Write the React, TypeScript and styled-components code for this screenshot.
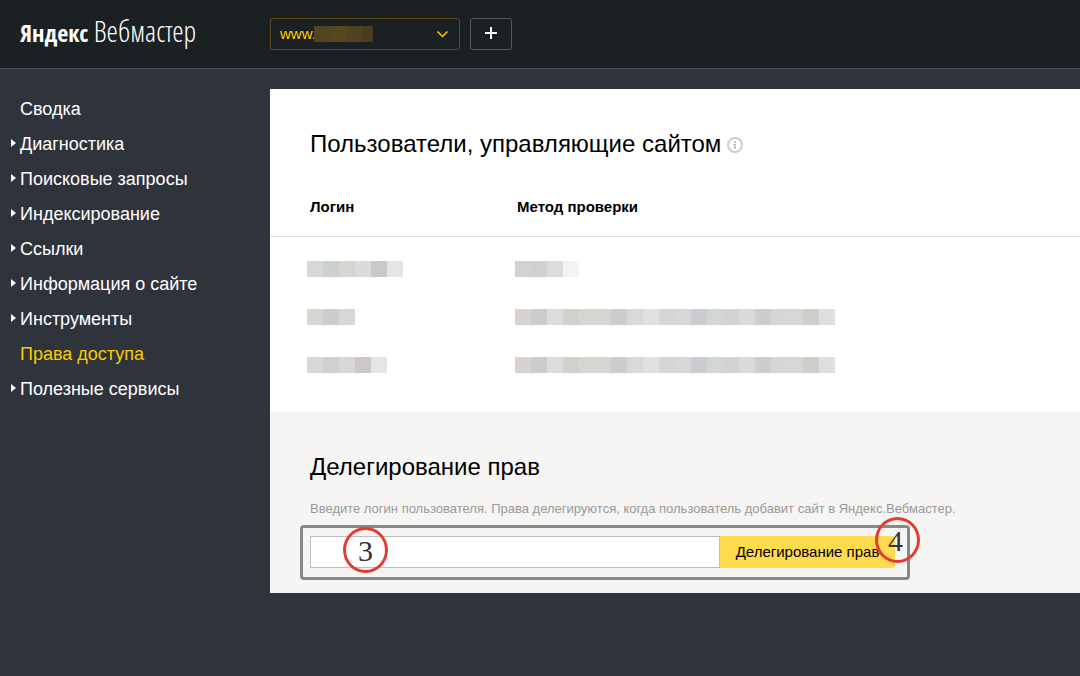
import React from 'react';
import styled, { createGlobalStyle } from 'styled-components';

const GlobalStyle = createGlobalStyle`
  *, *::before, *::after { box-sizing: border-box; }
  body {
    margin: 0;
    background: #2f333b;
    color: #000;
    font-family: 'Liberation Sans', Arial, sans-serif;
  }
`;

const Page = styled.div`
  min-height: 100vh;
  display: flex;
  flex-direction: column;
`;

const Header = styled.header`
  display: flex;
  align-items: center;
  height: 69px;
  border-bottom: 1px solid #484b4e;
  background: #1b2023;
`;

const Logo = styled.a`
  flex: 0 0 270px;
  padding: 0 0 4px 20px;
  color: #fff;
  font-family: 'Open Sans Condensed Light', 'Roboto Condensed Light', 'Roboto Condensed', 'Open Sans Condensed', sans-serif;
  font-size: 29px;
  line-height: 32px;
  font-weight: 300;
  white-space: nowrap;
  text-decoration: none;
`;

const LogoBrand = styled.strong`
  font-family: 'Open Sans Condensed', 'Roboto Condensed', sans-serif;
  font-size: 24px;
  font-weight: 700;
`;

const SitePicker = styled.div`
  position: relative;
  width: 190px;
  margin-right: 10px;
`;

const SiteSelect = styled.select`
  display: block;
  width: 100%;
  height: 32px;
  padding: 0 32px 2px 9px;
  border: 1px solid #5c4c18;
  border-radius: 3px;
  background: transparent;
  color: #fc0;
  font-family: inherit;
  font-size: 15px;
  appearance: none;
`;

const Chevron = styled.svg`
  position: absolute;
  right: 11px;
  top: 11px;
  pointer-events: none;
`;

const SiteMask = styled.div`
  position: absolute;
  left: 44px;
  top: 8px;
  pointer-events: none;
`;

const AddButton = styled.button`
  display: flex;
  align-items: center;
  justify-content: center;
  width: 42px;
  height: 32px;
  padding: 0 0 2px;
  border: 1px solid #54585b;
  border-radius: 3px;
  background: transparent;
`;

const Main = styled.div`
  display: flex;
  flex: 1;
  align-items: flex-start;
`;

const Sidebar = styled.nav`
  flex: 0 0 270px;
  padding-top: 22px;
`;

const Menu = styled.ul`
  margin: 0;
  padding: 0;
  list-style: none;
`;

const MenuItem = styled.li`
  display: flex;
  align-items: center;
  height: 35px;
  padding-left: 11px;
`;

const Arrow = styled.span<{ $visible: boolean }>`
  width: 9px;
  height: 10px;
  &::before {
    content: '';
    display: ${(p) => (p.$visible ? 'block' : 'none')};
    width: 0;
    border: 4px solid transparent;
    border-left: 5px solid #fff;
    border-right: 0;
  }
`;

const MenuLink = styled.a<{ $active: boolean }>`
  padding-top: 2px;
  color: ${(p) => (p.$active ? '#f8cc00' : '#fff')};
  font-size: 18px;
  line-height: 33px;
  text-decoration: none;
`;

const Content = styled.main`
  flex: 1;
  min-width: 0;
  margin-top: 20px;
  background: #fff;
`;

const Users = styled.section`
  padding: 40px 0 23px;
`;

const Delegation = styled.section`
  padding: 40px 40px 25px;
  background: #f6f5f3;
`;

const TitleRow = styled.div`
  display: flex;
  align-items: center;
  gap: 6px;
  padding-left: 40px;
`;

const Title = styled.h2`
  margin: 0;
  font-size: 24px;
  line-height: 30px;
  font-weight: 400;
`;

const InfoButton = styled.button`
  display: flex;
  margin: 2px 0 0;
  padding: 0;
  border: 0;
  background: none;
`;

const UsersTable = styled.table`
  width: 100%;
  margin-top: 18px;
  border-collapse: separate;
  border-spacing: 0;
  table-layout: fixed;
`;

const HeadCell = styled.th<{ $first?: boolean }>`
  width: ${(p) => (p.$first ? '245px' : 'auto')};
  height: 60px;
  padding: 0 0 0 ${(p) => (p.$first ? '40px' : '2px')};
  border-bottom: 1px solid #ddd;
  font-size: 15px;
  font-weight: 700;
  text-align: left;
`;

const Rows = styled.tbody`
  &::before {
    content: '';
    display: table-row;
    height: 8px;
  }
`;

const Cell = styled.td<{ $first?: boolean }>`
  height: 48px;
  padding: 0 0 0 ${(p) => (p.$first ? '37px' : '0')};
`;

const Mosaic = styled.div`
  display: flex;
`;

const Tile = styled.span<{ $color: string; $narrow?: boolean }>`
  width: ${(p) => (p.$narrow ? 11 : 16)}px;
  height: 16px;
  background: ${(p) => p.$color};
`;

const Hint = styled.p`
  margin: 18px 0;
  color: #999;
  font-size: 13px;
  line-height: 18px;
`;

const LoginForm = styled.form`
  position: relative;
  display: flex;
  max-width: 585px;
  height: 32px;
`;

const LoginInput = styled.input`
  flex: 1;
  min-width: 0;
  padding: 0 10px;
  border: 1px solid #bfbfbf;
  border-radius: 0;
  background: #fff;
  font-family: inherit;
  font-size: 15px;
`;

const SubmitButton = styled.button`
  width: 175px;
  padding: 0 15px 2px;
  border: 0;
  border-radius: 0 3px 3px 0;
  background: #ffdb4d;
  color: #000;
  font-family: inherit;
  font-size: 15px;
  white-space: nowrap;
`;

const Highlight = styled.div`
  position: absolute;
  inset: -11px -15px -12px -10px;
  border: 3px solid #888;
  border-radius: 4px;
  pointer-events: none;
`;

const StepMark = styled.span<{ $side: 'left' | 'right' }>`
  position: absolute;
  top: ${(p) => (p.$side === 'left' ? '-9px' : '-19px')};
  ${(p) => (p.$side === 'left' ? 'left: 33px;' : 'right: -25px; padding-right: 4px;')}
  width: 45px;
  height: 46px;
  border: 3px solid #e63b30;
  border-radius: 50%;
  color: #333;
  font-family: 'Liberation Serif', serif;
  font-size: 30px;
  line-height: 42px;
  text-align: center;
  pointer-events: none;
`;

const menu = [
  { label: 'Сводка', nested: false },
  { label: 'Диагностика', nested: true },
  { label: 'Поисковые запросы', nested: true },
  { label: 'Индексирование', nested: true },
  { label: 'Ссылки', nested: true },
  { label: 'Информация о сайте', nested: true },
  { label: 'Инструменты', nested: true },
  { label: 'Права доступа', nested: false, active: true },
  { label: 'Полезные сервисы', nested: true },
];

const siteTiles = ['#51451f', '#57481c', '#50431f', '#463e20'];

const longMethod = [
  '#d9d3cf', '#cbccce', '#dcdcdc', '#d0d1cb', '#d4d6d2', '#d5d6d1', '#cecbcc',
  '#dbd9d6', '#dfe1df', '#d5d5d8', '#dad8d6', '#cbccd1', '#d1d7d4', '#d1d3d4',
  '#dcdad8', '#cdcdcf', '#d5d7d6', '#d8d6d9', '#cfcfc9', '#e0dee4',
];

const users = [
  {
    login: ['#d8d7d3', '#cbd0d0', '#d6d5cf', '#d8dcdf', '#cdc7cb', '#e1e6e9'],
    method: ['#d3d1d2', '#d2cfd0', '#dcdcdf', '#f5f4f2'],
  },
  { login: ['#d9d5d1', '#cccecc', '#d4d8d9'], method: longMethod },
  { login: ['#d9d8d4', '#d0d0d1', '#dad6d8', '#ccc7c9', '#e1e6e9'], method: longMethod },
];

function Tiles({ colors }: { colors: string[] }) {
  return (
    <Mosaic>
      {colors.map((color, i) => (
        <Tile key={i} $color={color} />
      ))}
    </Mosaic>
  );
}

export default function App() {
  return (
    <Page>
      <GlobalStyle />
      <Header>
        <Logo href="#">
          <LogoBrand>Яндекс</LogoBrand> Вебмастер
        </Logo>
        <SitePicker>
          <SiteSelect aria-label="Сайт">
            <option>www.</option>
          </SiteSelect>
          <SiteMask>
            <Mosaic>
              {siteTiles.map((color, i) => (
                <Tile key={i} $color={color} $narrow={i === siteTiles.length - 1} />
              ))}
            </Mosaic>
          </SiteMask>
          <Chevron width="13" height="10" viewBox="0 0 13 10" fill="none" stroke="#fc0" strokeWidth="1.5">
            <path d="M1.5 2.5 6.5 7.5 11.5 2.5" />
          </Chevron>
        </SitePicker>
        <AddButton type="button" aria-label="Добавить сайт">
          <svg width="12" height="12" viewBox="0 0 12 12" fill="#fff">
            <path d="M5 0h2v5h5v2H7v5H5V7H0V5h5z" />
          </svg>
        </AddButton>
      </Header>
      <Main>
        <Sidebar>
          <Menu>
            {menu.map((item) => (
              <MenuItem key={item.label}>
                <Arrow $visible={item.nested} />
                <MenuLink href="#" $active={Boolean(item.active)}>
                  {item.label}
                </MenuLink>
              </MenuItem>
            ))}
          </Menu>
        </Sidebar>
        <Content>
          <Users>
            <TitleRow>
              <Title>Пользователи, управляющие сайтом</Title>
              <InfoButton type="button" aria-label="Справка">
                <svg width="16" height="16" viewBox="0 0 16 16" fill="none">
                  <circle cx="8" cy="8" r="7" stroke="#ccc" strokeWidth="2" />
                  <path d="M7 4h2v2H7zM6 7h3v5H7V8H6z" fill="#c4c4c4" />
                </svg>
              </InfoButton>
            </TitleRow>
            <UsersTable>
              <thead>
                <tr>
                  <HeadCell $first>Логин</HeadCell>
                  <HeadCell>Метод проверки</HeadCell>
                </tr>
              </thead>
              <Rows>
                {users.map((user, i) => (
                  <tr key={i}>
                    <Cell $first>
                      <Tiles colors={user.login} />
                    </Cell>
                    <Cell>
                      <Tiles colors={user.method} />
                    </Cell>
                  </tr>
                ))}
              </Rows>
            </UsersTable>
          </Users>
          <Delegation>
            <Title>Делегирование прав</Title>
            <Hint id="login-hint">
              Введите логин пользователя. Права делегируются, когда пользователь добавит сайт в Яндекс.Вебмастер.
            </Hint>
            <LoginForm onSubmit={(e) => e.preventDefault()}>
              <LoginInput type="text" aria-label="Логин пользователя" aria-describedby="login-hint" />
              <SubmitButton type="submit">Делегирование прав</SubmitButton>
              <Highlight />
              <StepMark $side="left">3</StepMark>
              <StepMark $side="right">4</StepMark>
            </LoginForm>
          </Delegation>
        </Content>
      </Main>
    </Page>
  );
}
